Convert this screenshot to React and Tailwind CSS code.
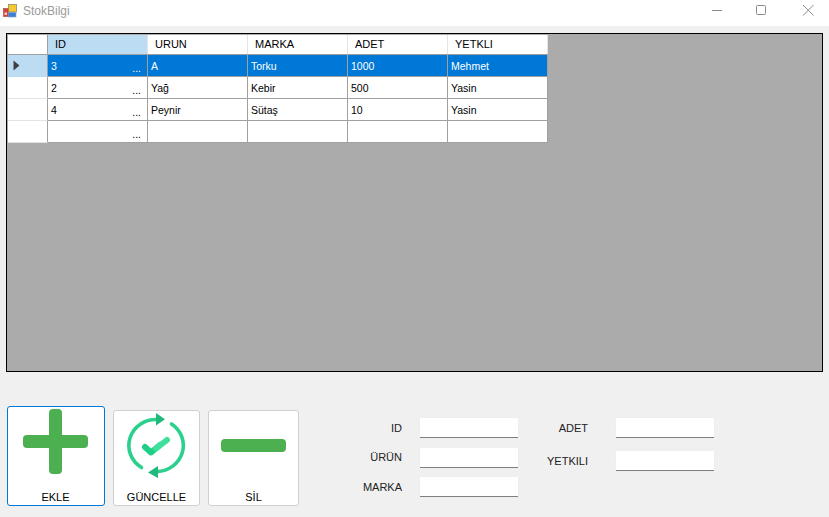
const columns = ['ID', 'URUN', 'MARKA', 'ADET', 'YETKLI'];

const rows = [
  ['3', 'A', 'Torku', '1000', 'Mehmet'],
  ['2', 'Yağ', 'Kebir', '500', 'Yasin'],
  ['4', 'Peynir', 'Sütaş', '10', 'Yasin'],
  ['', '', '', '', ''],
];

const AppIcon = () => (
  <svg width="15" height="14" viewBox="0 0 15 14" className="ml-[3px]">
    <rect x="0.5" y="4.5" width="5.5" height="8" fill="#d8403a" stroke="#9b4a45" strokeWidth="0.6" />
    <rect x="1.5" y="8.5" width="2.5" height="2.5" fill="#f3d6c8" />
    <rect x="5.5" y="0.5" width="8" height="7.5" fill="#f5c92f" stroke="#8f8b6a" strokeWidth="0.8" />
    <rect x="5.5" y="8.5" width="7.5" height="4.5" fill="#3f7fd6" stroke="#7f9fc8" strokeWidth="0.6" />
  </svg>
);

const TitleBar = () => (
  <div className="h-[26px] bg-white flex items-center pb-[5px]">
    <AppIcon />
    <span className="ml-[5px] text-[12px] text-[#9a9a9a]">StokBilgi</span>
    <div className="ml-auto flex items-center h-full">
      <svg width="12" height="12" viewBox="0 0 12 12" className="mr-[32px] -mt-[1px]">
        <path d="M1 6.5H11" stroke="#8a8a8a" strokeWidth="1" />
      </svg>
      <svg width="12" height="12" viewBox="0 0 12 12" className="mr-[35px] -mt-[1px]">
        <rect x="1.5" y="1.5" width="9" height="9" rx="1" fill="none" stroke="#8a8a8a" strokeWidth="1" />
      </svg>
      <svg width="12" height="12" viewBox="0 0 12 12" className="mr-[15px] -mt-[1px]">
        <path d="M1 1L11.5 11.5M11.5 1L1 11.5" stroke="#8a8a8a" strokeWidth="1" />
      </svg>
    </div>
  </div>
);

const DataGrid = () => (
  <div className="mt-[7px] mx-[6px] h-[339px] border border-black bg-[#ababab] p-px">
    <div className="w-[540px]">
      {/* header row */}
      <div className="flex h-[20px] bg-white border-b border-[#a0a0a0]">
        <div className="w-[40px] border-r border-[#a0a0a0]" />
        {columns.map((col, i) => (
          <div
            key={col}
            className={`w-[100px] pl-[7px] flex items-center border-r border-[#e3e3e3] ${i === 0 ? 'bg-[#bcdcf4]' : ''}`}
          >
            {col}
          </div>
        ))}
      </div>
      {rows.map((row, r) => {
        const selected = r === 0;
        return (
          <div key={r} className="flex h-[22px]">
            <div
              className={`w-[40px] flex items-center pl-[5px] border-r border-[#a0a0a0] border-b ${selected ? 'bg-[#bcdcf4] border-b-[#bcdcf4]' : 'bg-white border-b-[#e3e3e3]'}`}
            >
              {selected && (
                <svg width="7" height="11" viewBox="0 0 7 11">
                  <path d="M0.5 0.5L6.5 5.5L0.5 10.5Z" fill="#404040" />
                </svg>
              )}
            </div>
            {row.map((cell, c) => (
              <div
                key={c}
                className={`relative w-[100px] pl-[3px] pt-[3px] text-[10.5px] flex items-center border-r border-b border-[#a0a0a0] ${selected ? 'bg-[#0078d7] text-white' : 'bg-white text-black'}`}
              >
                {cell}
                {c === 0 && <span className="absolute right-[6px] bottom-[3px] leading-none">...</span>}
              </div>
            ))}
          </div>
        );
      })}
    </div>
  </div>
);

const PlusIcon = () => (
  <svg width="65" height="65" viewBox="0 0 65 65">
    <rect x="26" y="0" width="13" height="65" rx="4" fill="#4caf50" />
    <rect x="0" y="26" width="65" height="13" rx="4" fill="#4caf50" />
  </svg>
);

const RefreshIcon = () => (
  <svg width="66" height="66" viewBox="124 412 66 66">
    <path d="M141.5 467.5A27 26 0 0 1 157 419.5" fill="none" stroke="#2bd08c" strokeWidth="3.6" strokeLinecap="round" />
    <path d="M171.5 424A27 26 0 0 1 157 471.5" fill="none" stroke="#2bd08c" strokeWidth="3.6" strokeLinecap="round" />
    <path d="M156 413L165 419.3L156 425.5Z" fill="#1fb97c" />
    <path d="M158 466L148 472.5L158 478Z" fill="#1fb97c" />
    <path d="M145 447L151 452.5L160 445" fill="none" stroke="#20cf86" strokeWidth="6" strokeLinecap="round" strokeLinejoin="round" />
    <path d="M156 448.5L167 440" fill="none" stroke="#3fe09b" strokeWidth="6" strokeLinecap="round" />
  </svg>
);

const MinusIcon = () => (
  <svg width="65" height="13" viewBox="0 0 65 13">
    <rect x="0" y="0" width="65" height="13" rx="4" fill="#4caf50" />
  </svg>
);

const Field = ({ label, labelWidth, gap }) => (
  <div className="flex items-center">
    <span className={`${labelWidth} text-right text-[#222]`}>{label}</span>
    <div className={`${gap} w-[98px] h-[20px] bg-white border-b border-[#808080] shadow-[0_0_1px_#e4e4e4]`} />
  </div>
);

export default function App() {
  return (
    <div className="w-[829px] h-[517px] overflow-hidden bg-[#f0f0f0] text-[11px] text-black font-['Liberation_Sans',sans-serif]">
      <TitleBar />
      <DataGrid />
      <div className="flex items-end mt-[34px] ml-[7px]">
        <button className="w-[98px] h-[100px] bg-white border border-[#0078d7] rounded-[3px] flex flex-col items-center pt-[2px] pr-px">
          <PlusIcon />
          <span className="mt-auto">EKLE</span>
        </button>
        <button className="ml-[8px] w-[87px] h-[96px] bg-white border border-[#d0d0d0] rounded-[3px] flex flex-col items-center pt-[1px]">
          <RefreshIcon />
          <span className="mt-auto">GÜNCELLE</span>
        </button>
        <button className="ml-[8px] w-[91px] h-[96px] bg-white border border-[#d0d0d0] rounded-[3px] flex flex-col items-center pt-[28px]">
          <MinusIcon />
          <span className="mt-auto">SİL</span>
        </button>
        <div className="self-start flex mt-[12px] ml-[49px]">
          <div className="flex flex-col gap-[9.5px]">
            <Field label="ID" labelWidth="w-[54px]" gap="ml-[18px]" />
            <Field label="ÜRÜN" labelWidth="w-[54px]" gap="ml-[18px]" />
            <Field label="MARKA" labelWidth="w-[54px]" gap="ml-[18px]" />
          </div>
          <div className="flex flex-col gap-[13px] ml-[28px]">
            <Field label="ADET" labelWidth="w-[42px]" gap="ml-[28px]" />
            <Field label="YETKILI" labelWidth="w-[42px]" gap="ml-[28px]" />
          </div>
        </div>
      </div>
    </div>
  );
}
